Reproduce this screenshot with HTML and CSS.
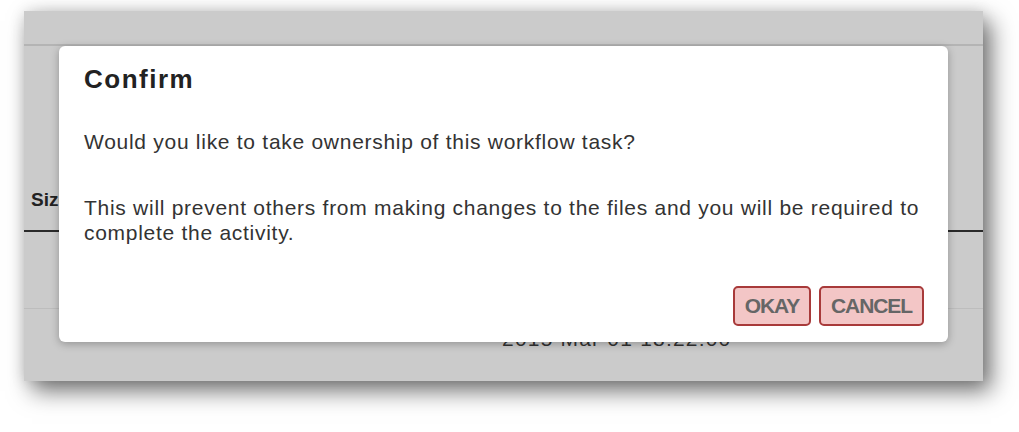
FILE: index.html
```html
<!DOCTYPE html>
<html>
<head>
<meta charset="utf-8">
<link rel="stylesheet" href="styles.css">
</head>
<body>
<div class="panel">
  <div class="panel-header"></div>
  <div class="table-head"><span class="th">Size</span></div>
  <div class="table-row"></div>
  <div class="table-row last"><span class="date">2015 Mar 01 18:22:00</span></div>

  <div class="modal">
    <h1 class="modal-title">Confirm</h1>
    <p class="msg first">Would you like to take ownership of this workflow task?</p>
    <p class="msg second">This will prevent others from making changes to the files and you will be required to complete the activity.</p>
    <div class="actions">
      <button class="btn okay">OKAY</button>
      <button class="btn cancel">CANCEL</button>
    </div>
  </div>
</div>
</body>
</html>
```
FILE: styles.css
```css
html, body {
  margin: 0;
  padding: 0;
  background: #ffffff;
}
body {
  font-family: "Liberation Sans", Arial, sans-serif;
  padding: 11px 0 0 24px;
  height: 432px;
  box-sizing: border-box;
  overflow: hidden;
}
.panel {
  position: relative;
  width: 959px;
  height: 370px;
  background: #cbcbcb;
  box-shadow: 8px 10px 22px rgba(0,0,0,0.55), 0 0 14px rgba(0,0,0,0.12);
  display: flex;
  flex-direction: column;
}
.panel-header {
  height: 33px;
  border-bottom: 2px solid #b4b4b4;
  flex: none;
}
.table-head {
  height: 186px;
  border-bottom: 2px solid #2a2a2a;
  display: flex;
  align-items: flex-end;
  padding: 0 0 19px 7px;
  box-sizing: border-box;
  flex: none;
}
.th {
  font-weight: bold;
  font-size: 19px;
  color: #222;
}
.table-row {
  height: 77px;
  border-bottom: 1px solid #bdbdbd;
  flex: none;
  box-sizing: border-box;
}
.table-row.last {
  border-bottom: none;
  padding-left: 478px;
  padding-top: 18px;
}
.date {
  font-size: 21px;
  letter-spacing: 1.2px;
  color: #333;
}
.modal {
  position: absolute;
  left: 35px;
  top: 35px;
  width: 889px;
  height: 296px;
  background: #fff;
  border-radius: 6px;
  box-shadow: 0 2px 8px rgba(0,0,0,0.28);
  padding: 19px 24px 0 25px;
  box-sizing: border-box;
  display: flex;
  flex-direction: column;
}
.modal-title {
  margin: 0;
  font-size: 26px;
  font-weight: bold;
  color: #222;
  letter-spacing: 1.5px;
  line-height: 28px;
}
.msg {
  margin: 0;
  font-size: 21px;
  letter-spacing: 0.72px;
  color: #333;
  line-height: 25px;
}
.msg.first {
  margin-top: 36px;
}
.msg.second {
  margin-top: 41px;
}
.actions {
  margin-top: 41px;
  display: flex;
  justify-content: flex-end;
  gap: 8px;
}
.btn {
  height: 40px;
  background: #f3c6c6;
  border: 2px solid #a83a3a;
  border-radius: 5px;
  color: #666;
  font-family: "Liberation Sans", Arial, sans-serif;
  font-weight: bold;
  font-size: 21px;
  letter-spacing: -1.1px;
  padding: 0;
  box-sizing: border-box;
}
.btn.okay { width: 78px; }
.btn.cancel { width: 105px; }
```
